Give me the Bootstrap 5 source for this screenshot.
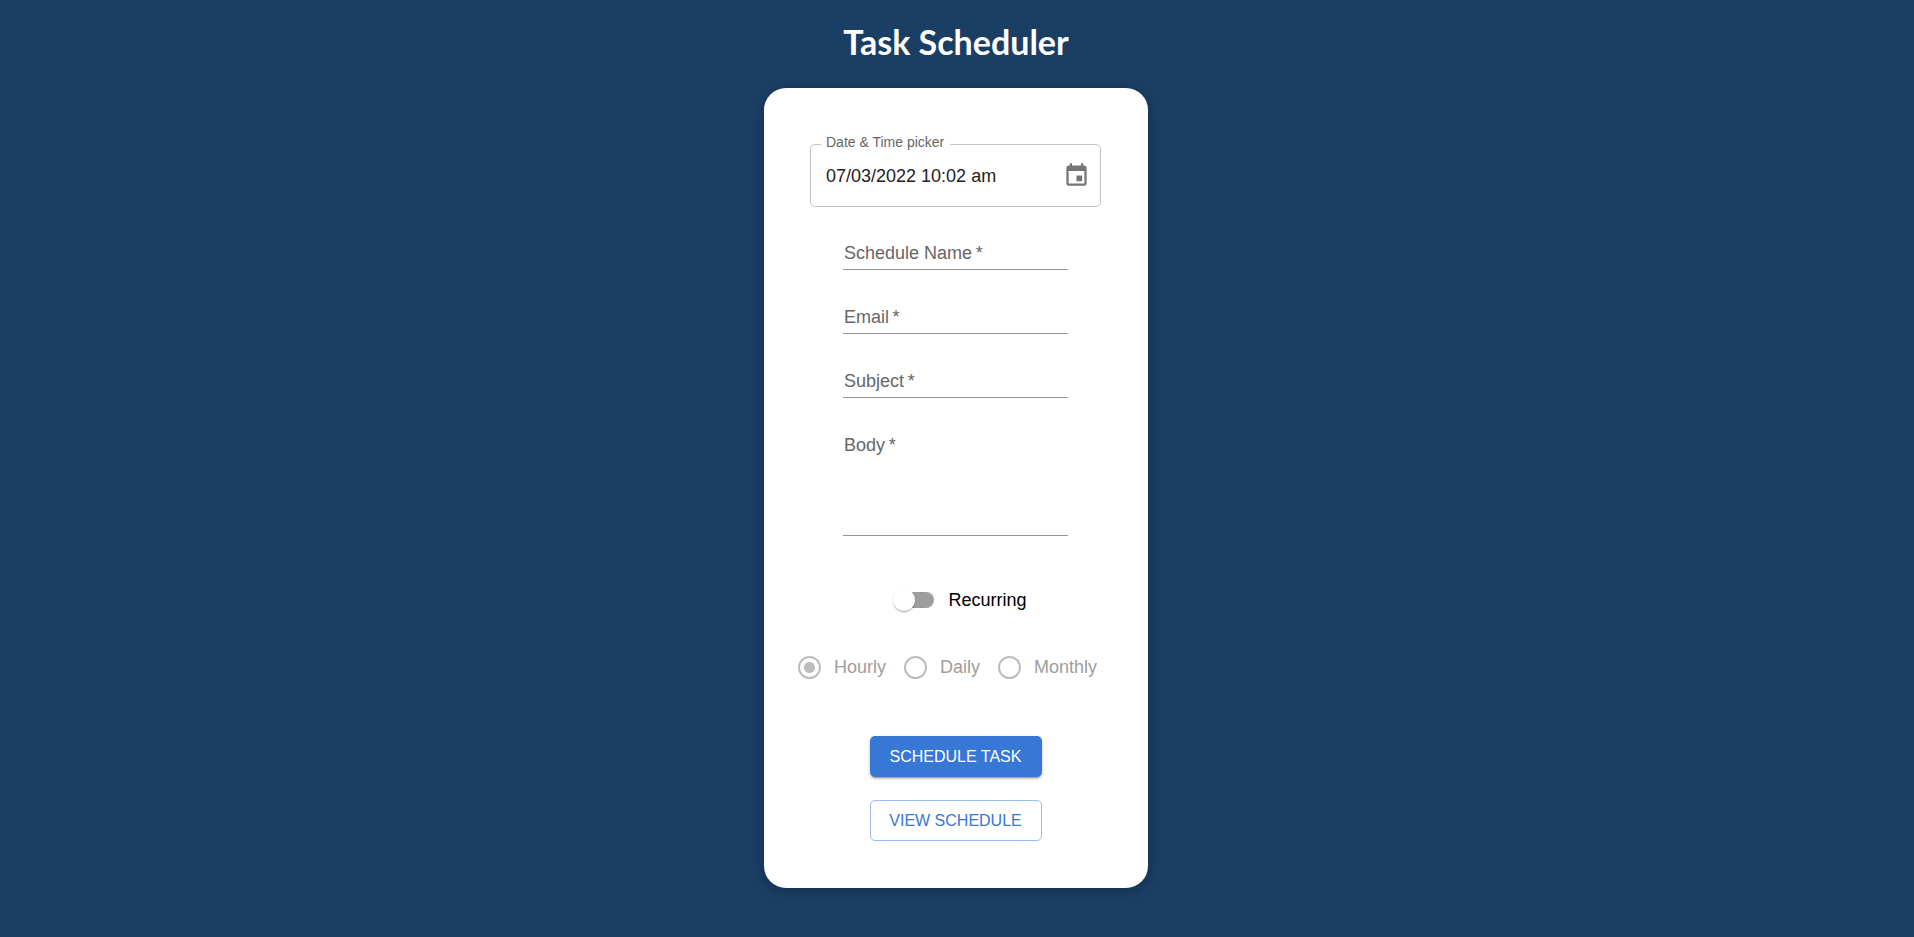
<!DOCTYPE html>
<html lang="en">
<head>
<meta charset="utf-8">
<meta name="viewport" content="width=device-width, initial-scale=1">
<title>Task Scheduler</title>
<link href="https://cdn.jsdelivr.net/npm/bootstrap@5.3.0/dist/css/bootstrap.min.css" rel="stylesheet">
<style>
  body {
    background: #1b3e64;
    font-family: "Liberation Sans", Arial, sans-serif;
    font-size: 18px;
    line-height: 24px;
    color: #000;
  }
  .scheduler { padding: 22px 14px 24px 12px; }
  .page-title {
    margin-bottom: 26px;
    font-family: Lato, sans-serif;
    font-size: 34px;
    line-height: 40px;
    font-weight: 700;
    color: #fff;
  }
  .task-panel {
    max-width: 384px;
    padding: 56px 25px 47px 24px;
    border-radius: 22px;
    box-shadow: 0 3px 14px rgba(0, 0, 0, .25);
  }
  .picker {
    width: 291px;
    height: 63px;
    padding: 0 10px 0 15px;
    border: 1px solid #c4c4c4;
    border-radius: 5px;
  }
  .picker-label {
    top: -13px;
    left: 10px;
    padding: 0 6px 0 5px;
    background: #fff;
    color: #666;
    font-size: 14px;
    line-height: 20px;
  }
  .plain-input {
    border: 0;
    padding: 0;
    background: transparent;
    outline: 0;
    color: #212121;
    min-width: 0;
  }
  .icon-btn { border: 0; padding: 0; background: transparent; color: #757575; line-height: 0; }

  .fields { width: 225px; margin-top: 27px; gap: 28px; }
  .line-field > * { grid-area: 1 / 1; }
  .line-field label { color: #666; padding: 7px 0 0 1px; align-self: start; pointer-events: none; }
  .line-field input, .line-field textarea { width: 100%; height: 36px; border-bottom: 1px solid #949494; resize: none; }
  .line-field textarea { height: 110px; }

  .recurring { margin-top: 52px; margin-left: 12px; gap: 14px; }
  .toggle {
    appearance: none;
    width: 38px;
    height: 16px;
    margin: 0;
    border-radius: 8px;
    background: #9e9e9e;
    position: relative;
  }
  .toggle::before {
    content: "";
    position: absolute;
    top: -3px;
    left: -3px;
    width: 22px;
    height: 22px;
    border-radius: 50%;
    background: #fff;
    box-shadow: 0 2px 1px -1px rgba(0, 0, 0, .2), 0 1px 1px rgba(0, 0, 0, .14), 0 1px 3px rgba(0, 0, 0, .12);
  }
  .toggle:checked::before { left: 19px; }

  .frequency { margin-top: 43px; gap: 18px; color: #9e9e9e; margin-left: -16px; }
  .frequency > div { gap: 13px; }
  .ring {
    appearance: none;
    width: 23px;
    height: 23px;
    margin: 0;
    border: 2px solid #bdbdbd;
    border-radius: 50%;
  }
  .ring:checked { background: radial-gradient(circle, #bdbdbd 5px, transparent 6px); }

  .actions { width: 172px; margin-top: 57px; gap: 23px; }
  .actions .btn { height: 41px; padding: 0; font-size: 16px; border-radius: 5px; }
  .btn-schedule, .btn-schedule:hover {
    background: #3777d5;
    color: #fff;
    border: 0;
    box-shadow: 0 3px 1px -2px rgba(0, 0, 0, .2), 0 2px 2px rgba(0, 0, 0, .14), 0 1px 5px rgba(0, 0, 0, .12);
  }
  .btn-view, .btn-view:hover { background: #fff; color: #3777d5; border: 1px solid #9bbbea; }
</style>
</head>
<body>
<main class="scheduler container-fluid d-flex flex-column align-items-center">
  <h1 class="page-title">Task Scheduler</h1>
  <form class="task-panel bg-white w-100 d-flex flex-column align-items-center">
    <div class="picker position-relative d-flex align-items-center">
      <label class="picker-label position-absolute" for="when">Date &amp; Time picker</label>
      <input class="plain-input flex-grow-1" id="when" type="text" value="07/03/2022 10:02 am">
      <button class="icon-btn" type="button" aria-label="Choose date">
        <svg width="27" height="27" viewBox="0 0 24 24" fill="currentColor" aria-hidden="true"><path d="M17 12h-5v5h5v-5zM16 1v2H8V1H6v2H5c-1.110 0-1.990.9-1.990 2L3 19c0 1.100.890 2 2 2h14c1.100 0 2-.9 2-2V5c0-1.100-.9-2-2-2h-1V1h-2zm3 18H5V8h14v11z"/></svg>
      </button>
    </div>

    <div class="fields d-flex flex-column">
      <div class="line-field d-grid">
        <label for="name">Schedule Name&#8201;*</label>
        <input class="plain-input" id="name" type="text">
      </div>
      <div class="line-field d-grid">
        <label for="email">Email&#8201;*</label>
        <input class="plain-input" id="email" type="email">
      </div>
      <div class="line-field d-grid">
        <label for="subject">Subject&#8201;*</label>
        <input class="plain-input" id="subject" type="text">
      </div>
      <div class="line-field d-grid">
        <label for="message">Body&#8201;*</label>
        <textarea class="plain-input" id="message"></textarea>
      </div>
    </div>

    <div class="recurring d-flex align-items-center">
      <input class="toggle" id="recurring" type="checkbox" role="switch">
      <label for="recurring">Recurring</label>
    </div>

    <div class="frequency d-flex align-items-center" role="radiogroup" aria-label="Frequency">
      <div class="d-flex align-items-center">
        <input class="ring" id="hourly" type="radio" name="frequency" checked disabled>
        <label for="hourly">Hourly</label>
      </div>
      <div class="d-flex align-items-center">
        <input class="ring" id="daily" type="radio" name="frequency" disabled>
        <label for="daily">Daily</label>
      </div>
      <div class="d-flex align-items-center">
        <input class="ring" id="monthly" type="radio" name="frequency" disabled>
        <label for="monthly">Monthly</label>
      </div>
    </div>

    <div class="actions d-flex flex-column">
      <button class="btn btn-schedule" type="button">SCHEDULE TASK</button>
      <button class="btn btn-view" type="button">VIEW SCHEDULE</button>
    </div>
  </form>
</main>
<script src="https://cdn.jsdelivr.net/npm/bootstrap@5.3.0/dist/js/bootstrap.bundle.min.js"></script>
</body>
</html>
